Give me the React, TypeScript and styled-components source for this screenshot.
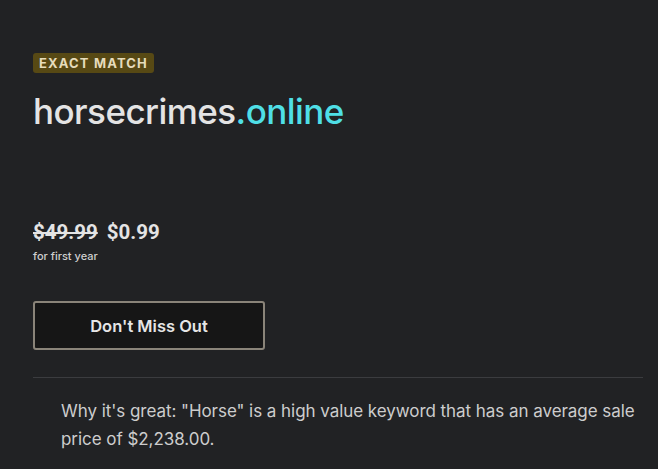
import React from "react";
import styled, { createGlobalStyle } from "styled-components";

const Global = createGlobalStyle`
  html, body { margin: 0; padding: 0; background: #212224; }
  body { font-family: Inter, "Noto Sans", sans-serif; color: #e2e2e2; }
`;

const Page = styled.div`
  width: 658px;
  height: 469px;
  box-sizing: border-box;
  padding: 53px 15px 0 33px;
  background: #212224;
  overflow: hidden;
  display: flex;
  flex-direction: column;
`;

const Badge = styled.span`
  align-self: flex-start;
  background: #574914;
  color: #e6dcbc;
  font-size: 13px;
  font-weight: 700;
  letter-spacing: 1.15px;
  line-height: 20px;
  height: 20px;
  padding: 0 6px;
  border-radius: 3px;
`;

const Domain = styled.h1`
  margin: 17px 0 0 0;
  font-size: 35px;
  font-weight: 550;
  line-height: 42px;
  color: #e4e4e4;
  letter-spacing: -0.55px;
`;

const Tld = styled.span`
  color: #4fdfe6;
`;

const PriceRow = styled.div`
  margin-top: 87px;
  display: flex;
  align-items: baseline;
  gap: 9px;
  font-family: Roboto, "Noto Sans", sans-serif;
  font-size: 20.5px;
  font-weight: 700;
  line-height: 26px;
  color: #e4e4e4;
`;

const OldPrice = styled.s`
  text-decoration-thickness: 2px;
`;

const Note = styled.div`
  margin-top: 4px;
  font-size: 11px;
  font-weight: 500;
  line-height: 14px;
  color: #cfcfcf;
`;

const Button = styled.button`
  margin-top: 38px;
  width: 232px;
  height: 49px;
  background: #161616;
  border: 2px solid #8a8479;
  border-radius: 3px;
  color: #e6e6e6;
  font-family: Inter, "Noto Sans", sans-serif;
  font-size: 16.5px;
  font-weight: 600;
`;

const Divider = styled.hr`
  margin: 27px 0 0 0;
  border: none;
  border-top: 1px solid #3b3c3f;
`;

const Why = styled.p`
  margin: 19px 0 0 28px;
  font-size: 17px;
  line-height: 28px;
  letter-spacing: -0.05px;
  color: #cdcdcd;
`;

export default function App() {
  return (
    <>
      <Global />
      <Page>
        <Badge>EXACT MATCH</Badge>
        <Domain>
          horsecrimes<Tld>.online</Tld>
        </Domain>
        <PriceRow>
          <OldPrice>$49.99</OldPrice>
          <span>$0.99</span>
        </PriceRow>
        <Note>for first year</Note>
        <Button>Don't Miss Out</Button>
        <Divider />
        <Why>
          Why it's great: "Horse" is a high value keyword that has an average sale price of $2,238.00.
        </Why>
      </Page>
    </>
  );
}
